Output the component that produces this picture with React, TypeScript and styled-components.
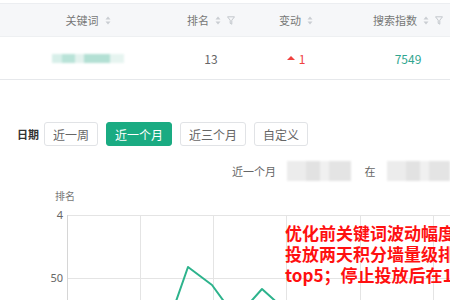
import React from 'react';
import styled, { createGlobalStyle } from 'styled-components';

const GlobalStyle = createGlobalStyle`
  html, body {
    margin: 0;
    padding: 0;
    background: #ffffff;
    overflow: hidden;
  }
  body {
    font-family: "Noto Sans CJK SC", "Noto Sans", sans-serif;
    color: #555;
  }
`;

const Page = styled.div`
  width: 450px;
  height: 300px;
  position: relative;
  overflow: hidden;
  padding-top: 3px;
  box-sizing: border-box;
`;

const Table = styled.div`
  width: 470px;
`;

const Row = styled.div<{ $head?: boolean }>`
  display: grid;
  grid-template-columns: 176px 70px 100px 124px;
  align-items: center;
  height: ${(p) => (p.$head ? '34px' : '43px')};
  background: ${(p) => (p.$head ? '#f6f7f9' : '#fff')};
  border-top: ${(p) => (p.$head ? '1px solid #eceef1' : 'none')};
  border-bottom: 1px solid ${(p) => (p.$head ? '#eef0f2' : '#e6e8eb')};
  box-sizing: border-box;
`;

const HeadCell = styled.div`
  display: flex;
  align-items: center;
  justify-content: center;
  gap: 6px;
  font-size: 11px;
  color: #777;
`;

const Cell = styled.div<{ $color?: string }>`
  display: flex;
  align-items: center;
  justify-content: center;
  gap: 4px;
  font-size: 12px;
  color: ${(p) => p.$color || '#666'};
`;

const Blur = styled.div<{ $w: number; $h: number; $tone: 'teal' | 'gray' }>`
  width: ${(p) => p.$w}px;
  height: ${(p) => p.$h}px;
  background: ${(p) =>
    p.$tone === 'teal'
      ? 'linear-gradient(90deg, #d7efe9 0 14%, #b9e3d8 14% 32%, #e3f2ee 32% 44%, #b3e0d4 44% 80%, #e6f4f0 80%)'
      : 'linear-gradient(90deg, #ececec 0 30%, #e2e2e2 30% 52%, #f0f0f0 52% 66%, #e4e4e4 66%)'};
  filter: blur(1px);
`;

const Tri = styled.span`
  width: 0;
  height: 0;
  border-left: 4px solid transparent;
  border-right: 4px solid transparent;
  border-bottom: 4px solid #f0413f;
`;

const SortIcon = () => (
  <svg width="6" height="9" viewBox="0 0 6 9">
    <path d="M3 0.5 L5.5 3.5 H0.5 Z" fill="#c9cdd2" />
    <path d="M3 8.5 L5.5 5.5 H0.5 Z" fill="#c9cdd2" />
  </svg>
);

const FilterIcon = () => (
  <svg width="8" height="9" viewBox="0 0 8 9">
    <path d="M0.5 0.8 H7.5 L4.8 4.2 V8.2 L3.2 7.3 V4.2 Z" fill="none" stroke="#c3c7cc" strokeWidth="1" />
  </svg>
);

const DateBar = styled.div`
  display: flex;
  align-items: center;
  gap: 8px;
  margin-top: 42px;
  padding-left: 17px;
`;

const DateLabel = styled.span`
  font-size: 11px;
  font-weight: bold;
  color: #333;
  white-space: nowrap;
  margin-right: -3px;
`;

const DateButton = styled.button<{ $active?: boolean }>`
  height: 24px;
  padding: 0 8px;
  border-radius: 3px;
  font-family: inherit;
  font-size: 12px;
  white-space: nowrap;
  border: 1px solid ${(p) => (p.$active ? '#1aab82' : '#e1e3e6')};
  background: ${(p) => (p.$active ? '#1aab82' : '#fff')};
  color: ${(p) => (p.$active ? '#fff' : '#666')};
`;

const Subtitle = styled.div`
  display: flex;
  align-items: center;
  gap: 11px;
  margin-top: 15px;
  padding-left: 232px;
  font-size: 11px;
  color: #666;
  white-space: nowrap;
`;

const AxisTitle = styled.div`
  font-size: 10px;
  color: #777;
  margin-top: 7px;
  padding-left: 55px;
`;

const Chart = styled.svg`
  display: block;
  margin-top: 3px;
`;

const Note = styled.div`
  position: absolute;
  left: 285px;
  top: 222px;
  font-size: 17px;
  line-height: 21px;
  font-weight: bold;
  color: #ff1010;
  white-space: nowrap;
`;

const gridX = [67, 140, 213, 286, 360, 433];

export default function App() {
  return (
    <Page>
      <GlobalStyle />
      <Table>
        <Row $head>
          <HeadCell>
            关键词 <SortIcon />
          </HeadCell>
          <HeadCell>
            排名 <SortIcon />
            <FilterIcon />
          </HeadCell>
          <HeadCell>
            变动 <SortIcon />
          </HeadCell>
          <HeadCell>
            搜索指数 <SortIcon />
            <FilterIcon />
          </HeadCell>
        </Row>
        <Row>
          <Cell>
            <Blur $w={72} $h={9} $tone="teal" />
          </Cell>
          <Cell>13</Cell>
          <Cell $color="#f0413f">
            <Tri />1
          </Cell>
          <Cell $color="#2fa58f">7549</Cell>
        </Row>
      </Table>

      <DateBar>
        <DateLabel>日期</DateLabel>
        <DateButton>近一周</DateButton>
        <DateButton $active>近一个月</DateButton>
        <DateButton>近三个月</DateButton>
        <DateButton>自定义</DateButton>
      </DateBar>

      <Subtitle>
        <span>近一个月</span>
        <Blur $w={70} $h={20} $tone="gray" />
        <span style={{ marginLeft: 3 }}>在</span>
        <Blur $w={70} $h={20} $tone="gray" />
      </Subtitle>

      <AxisTitle>排名</AxisTitle>

      <Chart width="450" height="100" viewBox="0 205 450 100">
        <line x1="67" y1="214.5" x2="450" y2="214.5" stroke="#e4e4e4" />
        <line x1="67" y1="277.5" x2="450" y2="277.5" stroke="#e4e4e4" />
        {gridX.map((x) => (
          <line key={x} x1={x + 0.5} y1="214" x2={x + 0.5} y2="305" stroke={x === 67 ? '#d6d6d6' : '#e4e4e4'} />
        ))}
        <text x="63" y="217.5" textAnchor="end" fontSize="11" fill="#666" fontFamily="Noto Sans, sans-serif">
          4
        </text>
        <text x="63" y="280.5" textAnchor="end" fontSize="11" fill="#666" fontFamily="Noto Sans, sans-serif">
          50
        </text>
        <polyline
          points="174,306 188,266 212,284 228,306"
          fill="none"
          stroke="#2db38c"
          strokeWidth="2"
          strokeLinejoin="round"
        />
        <polyline
          points="246,306 262,288 282,306"
          fill="none"
          stroke="#2db38c"
          strokeWidth="2"
          strokeLinejoin="round"
        />
      </Chart>

      <Note>
        <div>优化前关键词波动幅度较大，</div>
        <div>投放两天积分墙量级排名上升至</div>
        <div>top5；停止投放后在10名左右</div>
      </Note>
    </Page>
  );
}
